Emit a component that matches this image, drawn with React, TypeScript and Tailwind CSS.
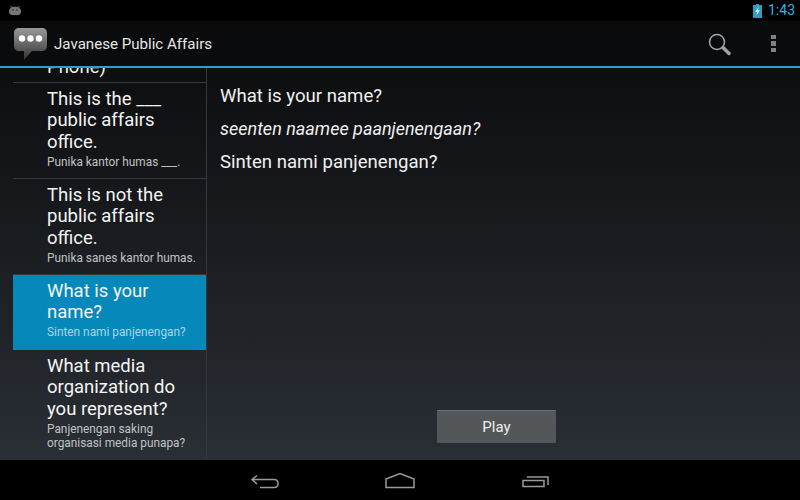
export default function App() {
  const items = [
    { t: ["This is the ___", "public affairs", "office."], s: ["Punika kantor humas ___."], cls: "h-[96px] border-[#34383d]" },
    { t: ["This is not the", "public affairs", "office."], s: ["Punika sanes kantor humas."], cls: "h-[96px] border-[#34383d]" },
    { t: ["What is your", "name?"], s: ["Sinten nami panjenengan?"], cls: "h-[75px] bg-[#0689ba] border-[#0689ba]", sel: true },
    { t: ["What media", "organization do", "you represent?"], s: ["Panjenengan saking", "organisasi media punapa?"], cls: "h-[110px] border-transparent" },
  ];
  return (
    <div className="w-[800px] h-[500px] flex flex-col bg-black overflow-hidden text-white" style={{ fontFamily: "Roboto, sans-serif" }}>
      <div className="h-[21px] shrink-0 bg-black flex items-center justify-between pl-[8px] pr-[5px]">
        <svg width="14" height="11" viewBox="0 0 14 11">
          <path d="M1 6.500C1 3.500 3.500 1.800 7 1.800S13 3.500 13 6.500C13 9 11.500 10 10 10H4C2.500 10 1 9 1 6.500Z" fill="#777" />
          <path d="M3.500 2.800L2.700 .8M10.500 2.800L11.300 .8" stroke="#777" />
          <circle cx="5" cy="5" r=".8" fill="#222" />
          <circle cx="9" cy="5" r=".8" fill="#222" />
        </svg>
        <div className="flex items-center gap-[6px]">
          <svg width="9" height="14" viewBox="0 0 9 14">
            <path d="M3 0H6V1H9V14H0V1H3Z" fill="#2f9cc6" />
            <path d="M5.500 3L2.200 8H4.200L3.500 11.500L6.800 6.300H4.800Z" fill="#dff3fa" />
          </svg>
          <span className="text-[14px] leading-[21px] text-[#33b5e5]">1:43</span>
        </div>
      </div>
      <div className="h-[47px] shrink-0 bg-[#0a0b0c] border-b-2 border-[#2d9ec6] flex items-center pl-[14px] pr-[24px]">
        <svg width="34" height="34" viewBox="0 0 34 34" className="mt-[1px]">
          <defs>
            <linearGradient id="bubble" x1="0" y1="0" x2="0" y2="1">
              <stop offset="0" stopColor="#999999" />
              <stop offset="1" stopColor="#333333" />
            </linearGradient>
          </defs>
          <path d="M5 1H28C31 1 33 3 33 6V19C33 22 31 24 28 24H18L10 33V24H5C2 24 0 22 0 19V6C0 3 2 1 5 1Z" fill="url(#bubble)" />
          <circle cx="8" cy="11.500" r="3.200" fill="#fff" />
          <circle cx="16.500" cy="11.500" r="3.200" fill="#fff" />
          <circle cx="25" cy="11.500" r="3.200" fill="#fff" />
        </svg>
        <span className="ml-[6px] text-[15.100px] leading-[20px] text-[#e6e6e6]">Javanese Public Affairs</span>
        <div className="ml-auto flex items-center gap-[39px]">
          <svg width="24" height="24" viewBox="0 0 24 24">
            <circle cx="9" cy="10" r="7.500" fill="none" stroke="#a6a6a6" strokeWidth="1.500" />
            <path d="M15 15.500L21 21.500" stroke="#a0a0a0" strokeWidth="3.500" strokeLinecap="round" />
          </svg>
          <div className="flex flex-col gap-[2px]">
            <div className="w-[5px] h-[4.500px] bg-[#808080]" />
            <div className="w-[5px] h-[4.500px] bg-[#808080]" />
            <div className="w-[5px] h-[4.500px] bg-[#808080]" />
          </div>
        </div>
      </div>
      <div className="flex-1 min-h-0 flex bg-gradient-to-b from-[#0d0e10] to-[#2a2f35]">
        <div className="w-[207px] shrink-0 pl-[13px] overflow-hidden">
          <div className="h-full border-r border-[#34383d] overflow-hidden">
            <div className="h-[15px] overflow-hidden border-b border-[#34383d] pl-[34px]">
              <div className="text-[18.500px] leading-[21.500px] -mt-[11px] text-[#f0f0f0]">Phone)</div>
            </div>
            {items.map((it) => (
              <div key={it.t[0]} className={`pl-[34px] pr-[8px] pt-[5.500px] border-b ${it.cls}`}>
                {it.t.map((l) => (
                  <div key={l} className="text-[18.500px] leading-[21.500px] text-[#f4f4f4] whitespace-nowrap">{l}</div>
                ))}
                <div className="mt-[1.500px]">
                  {it.s.map((l) => (
                    <div key={l} className={`text-[11.850px] leading-[14px] whitespace-nowrap ${it.sel ? "text-[#a9d4e4]" : "text-[#c0c2c4]"}`}>{l}</div>
                  ))}
                </div>
              </div>
            ))}
          </div>
        </div>
        <div className="flex-1 flex flex-col pl-[13px] pt-[17px]">
          <div className="text-[18.600px] leading-[22px] text-[#f0f0f0]">What is your name?</div>
          <div className="text-[18px] leading-[22px] italic mt-[11px] text-[#f0f0f0]">seenten naamee paanjenengaan?</div>
          <div className="text-[18.600px] leading-[22px] mt-[11px] text-[#f0f0f0]">Sinten nami panjenengan?</div>
          <div className="mt-auto mb-[17px] ml-[217px] w-[119px] h-[33px] rounded-[1px] bg-[#53575a] border-t border-[#6a6e70] flex items-center justify-center pt-[1px] text-[15px] text-[#eeeeee]">Play</div>
        </div>
      </div>
      <div className="h-[40px] shrink-0 bg-black flex items-center justify-center">
        <svg width="300" height="40" viewBox="0 0 300 40" fill="none" stroke="#9a9a9a" strokeWidth="1.500">
          <path d="M3 19.500H24C27 19.500 28 21.500 28 23.500C28 25.500 27 27.500 24 27.500H10M7 15.500L2 19.500L7 24" />
          <path d="M136 27.500V19L150 13.500L164 19V27.500Z" />
          <path d="M273 20.500H294V26.500H273ZM277 17H298V25" />
        </svg>
      </div>
    </div>
  );
}
